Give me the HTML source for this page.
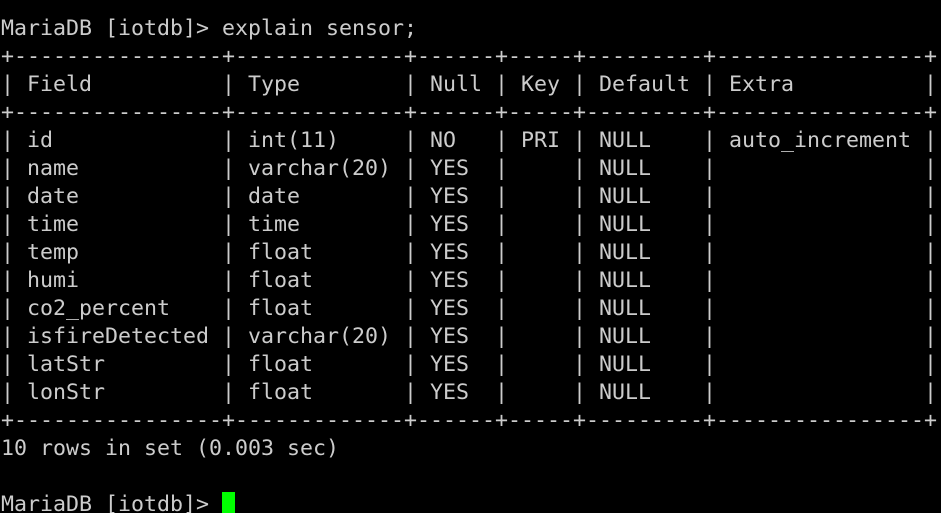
<!DOCTYPE html>
<html><head><style>
html,body{margin:0;padding:0;background:#000;width:941px;height:513px;overflow:hidden}
pre{margin:0;padding:15px 0 0 1px;font-family:"DejaVu Sans Mono","Liberation Mono",monospace;font-size:21.6px;line-height:28px;color:#cccccc;letter-spacing:0}
.c{display:inline-block;width:13px;height:24px;background:#00ff00;vertical-align:-5px}
</style></head><body><pre>MariaDB [iotdb]&gt; explain sensor;
+----------------+-------------+------+-----+---------+----------------+
| Field          | Type        | Null | Key | Default | Extra          |
+----------------+-------------+------+-----+---------+----------------+
| id             | int(11)     | NO   | PRI | NULL    | auto_increment |
| name           | varchar(20) | YES  |     | NULL    |                |
| date           | date        | YES  |     | NULL    |                |
| time           | time        | YES  |     | NULL    |                |
| temp           | float       | YES  |     | NULL    |                |
| humi           | float       | YES  |     | NULL    |                |
| co2_percent    | float       | YES  |     | NULL    |                |
| isfireDetected | varchar(20) | YES  |     | NULL    |                |
| latStr         | float       | YES  |     | NULL    |                |
| lonStr         | float       | YES  |     | NULL    |                |
+----------------+-------------+------+-----+---------+----------------+
10 rows in set (0.003 sec)

MariaDB [iotdb]&gt; <span class="c"></span></pre></body></html>
